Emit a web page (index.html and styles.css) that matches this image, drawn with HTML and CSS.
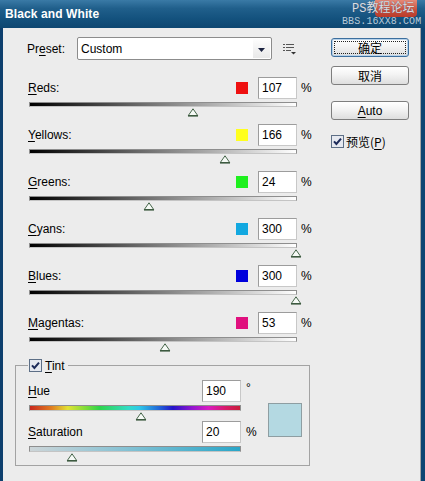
FILE: index.html
```html
<!DOCTYPE html>
<html>
<head>
<meta charset="utf-8">
<link rel="stylesheet" href="styles.css">
</head>
<body>
<div class="window">
  <div class="titlebar">
    <span class="title">Black and White</span>
    <div class="watermark">
      <span class="wm-close"></span>
      <span class="wm-line1">PS教程论坛</span>
      <span class="wm-line2">BBS.16XX8.COM</span>
    </div>
  </div>
  <div class="body">
    <div class="left">
      <div class="preset-row">
        <span class="preset-label">Pr<u>e</u>set:</span>
        <div class="select">
          <span class="select-text">Custom</span>
          <span class="select-btn"><svg width="7" height="4" viewBox="0 0 7 4"><path d="M0 0H7L3.5 4Z" fill="#1b2340"/></svg></span>
        </div>
        <svg class="menu-icon" width="14" height="11" viewBox="0 0 14 11">
          <rect x="0" y="0" width="2" height="1" fill="#555"/><rect x="3" y="0" width="8" height="1" fill="#555"/>
          <rect x="0" y="3" width="2" height="1" fill="#555"/><rect x="3" y="3" width="8" height="1" fill="#555"/>
          <rect x="0" y="6" width="2" height="1" fill="#555"/><rect x="3" y="6" width="5" height="1" fill="#555"/>
          <path d="M8 8H13L10.5 10.5Z" fill="#333"/>
        </svg>
      </div>

      <div class="sliders">
        <div class="slider">
          <div class="slider-head"><span class="label"><u>R</u>eds:</span><span class="swatch sw-red"></span><span class="field">107</span><span class="unit">%</span></div>
          <div class="track gray"><svg class="thumb" style="left:61.4%" width="11" height="9" viewBox="0 0 11 9"><path d="M5.5 0.8L10.2 7.5H0.8Z" fill="#f6faf6" stroke="#46664a"/><rect x="0.5" y="7" width="10" height="1.6" fill="#3d5a40"/></svg></div>
        </div>
        <div class="slider">
          <div class="slider-head"><span class="label"><u>Y</u>ellows:</span><span class="swatch sw-yellow"></span><span class="field">166</span><span class="unit">%</span></div>
          <div class="track gray"><svg class="thumb" style="left:73.2%" width="11" height="9" viewBox="0 0 11 9"><path d="M5.5 0.8L10.2 7.5H0.8Z" fill="#f6faf6" stroke="#46664a"/><rect x="0.5" y="7" width="10" height="1.6" fill="#3d5a40"/></svg></div>
        </div>
        <div class="slider">
          <div class="slider-head"><span class="label"><u>G</u>reens:</span><span class="swatch sw-green"></span><span class="field">24</span><span class="unit">%</span></div>
          <div class="track gray"><svg class="thumb" style="left:44.8%" width="11" height="9" viewBox="0 0 11 9"><path d="M5.5 0.8L10.2 7.5H0.8Z" fill="#f6faf6" stroke="#46664a"/><rect x="0.5" y="7" width="10" height="1.6" fill="#3d5a40"/></svg></div>
        </div>
        <div class="slider">
          <div class="slider-head"><span class="label"><u>C</u>yans:</span><span class="swatch sw-cyan"></span><span class="field">300</span><span class="unit">%</span></div>
          <div class="track gray"><svg class="thumb" style="left:100%" width="11" height="9" viewBox="0 0 11 9"><path d="M5.5 0.8L10.2 7.5H0.8Z" fill="#f6faf6" stroke="#46664a"/><rect x="0.5" y="7" width="10" height="1.6" fill="#3d5a40"/></svg></div>
        </div>
        <div class="slider">
          <div class="slider-head"><span class="label"><u>B</u>lues:</span><span class="swatch sw-blue"></span><span class="field">300</span><span class="unit">%</span></div>
          <div class="track gray"><svg class="thumb" style="left:100%" width="11" height="9" viewBox="0 0 11 9"><path d="M5.5 0.8L10.2 7.5H0.8Z" fill="#f6faf6" stroke="#46664a"/><rect x="0.5" y="7" width="10" height="1.6" fill="#3d5a40"/></svg></div>
        </div>
        <div class="slider">
          <div class="slider-head"><span class="label"><u>M</u>agentas:</span><span class="swatch sw-magenta"></span><span class="field">53</span><span class="unit">%</span></div>
          <div class="track gray"><svg class="thumb" style="left:50.6%" width="11" height="9" viewBox="0 0 11 9"><path d="M5.5 0.8L10.2 7.5H0.8Z" fill="#f6faf6" stroke="#46664a"/><rect x="0.5" y="7" width="10" height="1.6" fill="#3d5a40"/></svg></div>
        </div>
      </div>

      <fieldset class="tint">
        <legend class="tint-legend">
          <svg class="check" width="13" height="13" viewBox="0 0 13 13"><rect x="0.5" y="0.5" width="12" height="12" fill="#e6e9f0" stroke="#5d6f86"/><path d="M3 6.3L5.4 9L10 3.6" fill="none" stroke="#1d2b5a" stroke-width="2"/></svg>
          <span class="legend-text"><u>T</u>int</span>
        </legend>
        <div class="tint-body">
          <div class="tint-controls">
            <div class="tint-head"><span class="label"><u>H</u>ue</span><span class="field">190</span><span class="unit deg">°</span></div>
            <div class="track hue"><svg class="thumb" style="left:52.8%" width="11" height="9" viewBox="0 0 11 9"><path d="M5.5 0.8L10.2 7.5H0.8Z" fill="#f6faf6" stroke="#46664a"/><rect x="0.5" y="7" width="10" height="1.6" fill="#3d5a40"/></svg></div>
            <div class="tint-head sat-head"><span class="label"><u>S</u>aturation</span><span class="field">20</span><span class="unit">%</span></div>
            <div class="track sat"><svg class="thumb" style="left:20%" width="11" height="9" viewBox="0 0 11 9"><path d="M5.5 0.8L10.2 7.5H0.8Z" fill="#f6faf6" stroke="#46664a"/><rect x="0.5" y="7" width="10" height="1.6" fill="#3d5a40"/></svg></div>
          </div>
          <div class="tint-swatch"></div>
        </div>
      </fieldset>
    </div>

    <div class="right">
      <div class="btn default"><span class="cjk">确定</span></div>
      <div class="btn cancel"><span class="cjk">取消</span></div>
      <div class="btn auto"><span><u>A</u>uto</span></div>
      <div class="preview">
        <svg class="check" width="13" height="13" viewBox="0 0 13 13"><rect x="0.5" y="0.5" width="12" height="12" fill="#e6e9f0" stroke="#5d6f86"/><path d="M3 6.3L5.4 9L10 3.6" fill="none" stroke="#1d2b5a" stroke-width="2"/></svg>
        <span class="cjk preview-text">预览(<u>P</u>)</span>
      </div>
    </div>
  </div>
</div>
</body>
</html>
```

FILE: styles.css
```css
* { box-sizing: border-box; }
html, body { margin: 0; padding: 0; }
body {
  width: 425px;
  height: 481px;
  overflow: hidden;
  font-family: "Liberation Sans", Arial, sans-serif;
  font-size: 12px;
  color: #000;
  background: #ececec;
}
u { text-decoration: underline; text-underline-offset: 2px; }

.window { width: 425px; height: 481px; display: flex; flex-direction: column; }

.titlebar {
  flex: none;
  height: 28px;
  position: relative;
  display: flex;
  align-items: center;
  padding-left: 5px;
  background: linear-gradient(#3a7aa6 0, #205f8b 30%, #14527e 65%, #0e4771 100%);
}
.title { color: #fff; font-weight: bold; font-size: 12px; letter-spacing: 0.1px; }

.watermark { position: absolute; left: 342px; top: 0; width: 80px; height: 28px; }
.wm-close {
  position: absolute; left: 33px; top: 0; width: 42px; height: 17px;
  background: linear-gradient(#e58a78, #c9503c 60%, #b83a2a);
  border-radius: 0 0 4px 4px;
}
.wm-line1 {
  position: absolute; left: 10px; top: 2px;
  font-family: "Liberation Mono", "Noto Sans CJK SC", monospace;
  font-size: 12px; line-height: 14px; color: #d8dde2; white-space: nowrap;
  text-shadow: 0 0 1px #556;
}
.wm-line2 {
  position: absolute; left: 0; top: 16px;
  font-family: "Liberation Mono", monospace;
  font-size: 10px; line-height: 12px; color: #b9cad8; letter-spacing: 0.1px; white-space: nowrap;
}

.body {
  flex: 1;
  display: flex;
  border-left: 3px solid #0d3f6d;
  border-right: 4px solid #0d4472;
  box-shadow: inset -1px 0 0 #a5a5a5;
}

.left { width: 311px; flex: none; padding: 9px 0 0 12px; }

.preset-row { display: flex; align-items: center; height: 23px; padding-left: 12px; }
.preset-label { width: 50px; }
.select {
  width: 195px; height: 23px;
  background: #fff;
  border: 1px solid #8c8c8c;
  border-radius: 2px;
  display: flex; align-items: center;
  padding: 1px 1px 1px 3px;
}
.select-text { flex: 1; }
.select-btn {
  width: 17px; height: 19px;
  background: linear-gradient(#fdfdfd, #e9e9e9);
  display: flex; align-items: center; justify-content: center;
  padding-top: 2px;
}
.menu-icon { margin-left: 11px; margin-top: 2px; }

.sliders { padding-left: 13px; margin-top: 17px; }
.slider { margin-bottom: 17px; }
.slider-head { display: flex; align-items: center; height: 22px; width: 283px; }
.label { flex: 1; }
.swatch { width: 12px; height: 12px; margin-right: 10px; }
.sw-red { background: #ee1010; }
.sw-yellow { background: #ffff1e; }
.sw-green { background: #1ef01e; }
.sw-cyan { background: #12a8e0; }
.sw-blue { background: #0000dc; }
.sw-magenta { background: #e0107e; }
.field {
  width: 39px; height: 22px;
  background: #fff;
  border: 1px solid #9c9c9c;
  border-right-color: #c8c8c8;
  border-bottom-color: #c8c8c8;
  padding-left: 3px;
  line-height: 20px;
}
.unit { margin-left: 4px; width: 10px; }

.track {
  position: relative;
  margin: 3px 0 0 1px;
  width: 268px;
  height: 5px;
  border: 1px solid #8e8e8e;
  border-bottom-color: #c4c4c4;
}
.track.gray { background: linear-gradient(to right, #000, #fff); }
.thumb { position: absolute; top: calc(100% + 2px); transform: translateX(-50%); display: block; }

.tint {
  margin: 1px 0 0 0;
  padding: 8px 0 13px 12px;
  width: 295px;
  min-width: 0;
  border: 1px solid #a3a3a3;
}
.tint-legend { padding: 0 3px 0 1px; display: flex; align-items: center; height: 13px; }
.legend-text { margin-left: 3px; }
.check { display: block; flex: none; }

.tint-body { display: flex; }
.tint-controls { width: 232px; }
.tint-head { display: flex; align-items: center; height: 22px; }
.tint-head .unit { margin-left: 5px; width: 14px; }
.tint-head .deg { align-self: flex-start; margin-top: 1px; }
.sat-head { margin-top: 10px; }
.track.hue, .track.sat { width: 212px; height: 6px; }
.track.hue {
  background: linear-gradient(to right,
    #c8281e 0%, #e07a20 10%, #e2e234 18%, #78dc3a 27%, #2ed44a 33%,
    #32dcc8 47%, #2ec8e8 52%, #2060d8 62%, #2414c8 68%, #9016d0 77%,
    #d81cc0 85%, #d81a6a 93%, #c81e3a 100%);
}
.track.sat { background: linear-gradient(to right, #cdd5d8, #86c2d4 45%, #2aa6c8); }
.tint-swatch {
  width: 34px; height: 34px;
  margin: 23px 0 0 8px;
  background: #b4d9e2;
  border: 1px solid #8e9ea2;
}

.right { padding: 10px 0 0 17px; }
.cjk { font-family: "Noto Sans CJK SC", "Liberation Sans", sans-serif; font-size: 12px; }
.btn {
  width: 78px; height: 19px;
  border: 1px solid #7e7e7e;
  border-radius: 3px;
  background: linear-gradient(#ffffff, #f3f3f3 45%, #dedede);
  display: flex; align-items: center; justify-content: center;
  line-height: 14px;
}
.btn.default {
  border-color: #3d6f9e;
  box-shadow: inset 0 0 0 1px #b7d2ea;
  outline: 1px dotted #222;
  outline-offset: -4px;
}
.btn.cancel { margin-top: 9px; }
.btn.auto { margin-top: 16px; }
.preview { display: flex; align-items: center; margin-top: 15px; height: 13px; }
.preview-text { margin-left: 2px; }
```
